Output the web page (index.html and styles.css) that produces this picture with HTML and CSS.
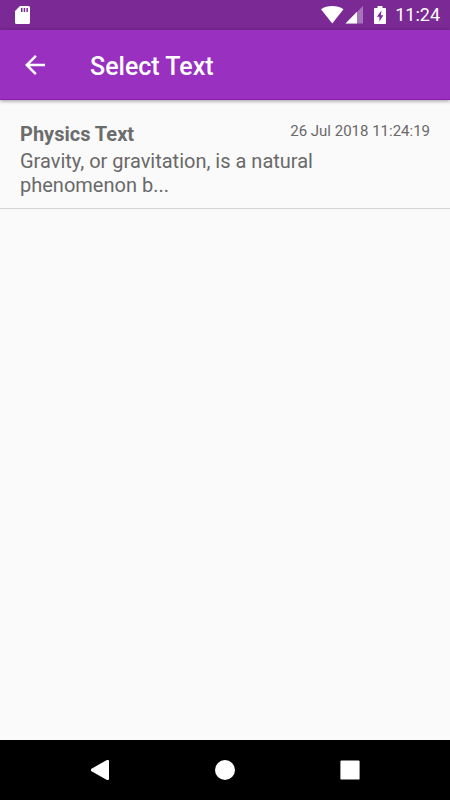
FILE: index.html
```html
<!DOCTYPE html>
<html lang="en">
<head>
  <meta charset="UTF-8">
  <title>Select Text</title>
  <meta name="viewport" content="width=device-width, initial-scale=1.0">
  <link rel="stylesheet" href="styles.css">
</head>
<body>
  <!-- System status bar -->
  <div class="status-bar">
    <svg class="sd-card" width="16" height="20" viewBox="0 0 16 20" aria-hidden="true">
      <path fill="#fff" fill-rule="evenodd" d="M5 1H13.500a1.500 1.500 0 0 1 1.500 1.500v15a1.500 1.500 0 0 1-1.500 1.500H1.500a1.500 1.500 0 0 1-1.500-1.500V6zM6 3v4h1.500V3zM8.700 3v4h1.500V3zM11.400 3v4h1.500V3z"/>
    </svg>
    <div class="status-icons">
      <svg width="44" height="20" viewBox="0 0 44 20" aria-hidden="true">
        <path fill="#fff" d="M0 4.300C6 0 16.500 0 22.500 4.300L11.250 18.500z"/>
        <path fill="#fff" opacity=".35" d="M42 1v17.500H24.500z"/>
        <path fill="#fff" d="M24.500 18.500L36 6.800v11.700z"/>
      </svg>
      <svg width="12" height="20" viewBox="0 0 12 20" aria-hidden="true">
        <path fill="#fff" fill-rule="evenodd" d="M3.500 1h5v2H11a1 1 0 0 1 1 1v14a1 1 0 0 1-1 1H1a1 1 0 0 1-1-1V4a1 1 0 0 1 1-1h2.500zM7.500 5.500L2.800 11.800h2.600V16.500L9.300 10.200H6.800z"/>
      </svg>
      <span class="clock">11:24</span>
    </div>
  </div>

  <header>
    <a class="back" href="#" aria-label="Back">
      <svg width="30" height="30" viewBox="0 0 24 24" aria-hidden="true">
        <path fill="#fff" d="M20 11H7.830l5.590-5.590L12 4l-8 8 8 8 1.410-1.410L7.830 13H20v-2z"/>
      </svg>
    </a>
    <h1>Select Text</h1>
  </header>

  <main>
    <ul class="text-list">
      <li>
        <a href="#">
          <div class="text-head">
            <h2>Physics Text</h2>
            <time datetime="2018-07-26T11:24:19">26 Jul 2018 11:24:19</time>
          </div>
          <p>Gravity, or gravitation, is a natural phenomenon b...</p>
        </a>
      </li>
    </ul>
  </main>

  <!-- System navigation -->
  <div class="nav-bar">
    <button type="button" aria-label="Back">
      <svg width="24" height="24" viewBox="0 0 24 24" aria-hidden="true">
        <path fill="#fff" stroke="#fff" stroke-width="2" stroke-linejoin="round" d="M20 3v18h-1L4 12.500v-1L19 3z"/>
      </svg>
    </button>
    <button type="button" aria-label="Home">
      <svg width="24" height="24" viewBox="0 0 24 24" aria-hidden="true">
        <circle cx="12" cy="12" r="10" fill="#fff"/>
      </svg>
    </button>
    <button type="button" aria-label="Recent apps">
      <svg width="24" height="24" viewBox="0 0 24 24" aria-hidden="true">
        <rect x="2.400" y="2.400" width="19.200" height="19.200" rx="1.200" fill="#fff"/>
      </svg>
    </button>
  </div>
</body>
</html>
```

FILE: styles.css
```css
* {
  box-sizing: border-box;
}
body {
  display: flex;
  flex-direction: column;
  min-height: 100vh;
  margin: 0;
  background: #fafafa;
  color: #696969;
  font-family: Roboto, sans-serif;
}
svg {
  display: block;
}
.status-bar {
  display: flex;
  align-items: center;
  justify-content: space-between;
  height: 30px;
  padding: 0 10px 0 15px;
  background: #7b2995;
  color: #fff;
}
.status-icons {
  display: flex;
  align-items: center;
  gap: 9px;
}
.clock {
  font-size: 18px;
  line-height: 20px;
}
header {
  display: flex;
  align-items: center;
  gap: 40px;
  height: 70px;
  padding: 0 20px;
  background: #9a30c0;
  border-bottom: 1px solid #8a1cae;
  color: #fff;
  box-shadow: 0 1px 4px rgba(0,0,0,0.4);
}
h1 {
  margin: 0;
  padding-top: 4px;
  font-size: 25px;
  font-weight: 500;
}
main {
  flex: 1;
}
.text-list {
  list-style: none;
  margin: 0;
  padding: 0;
}
.text-list li {
  border-bottom: 1px solid #d4d4d4;
}
.text-list a {
  display: block;
  padding: 20px 20px 11px;
  color: inherit;
  text-decoration: none;
}
.text-head {
  display: flex;
  justify-content: space-between;
  gap: 10px;
  margin-bottom: 1px;
}
h2 {
  margin: 0;
  font-size: 20px;
  line-height: 28px;
  font-weight: bold;
  color: #6c6c6c;
}
time {
  font-size: 15px;
  line-height: 22px;
}
.text-list p {
  max-width: 320px;
  margin: 0;
  font-size: 20px;
  line-height: 24px;
}
.nav-bar {
  display: flex;
  align-items: center;
  justify-content: center;
  gap: 77px;
  height: 60px;
  background: #000;
}
.nav-bar button {
  padding: 12px;
  border: none;
  background: none;
  cursor: pointer;
}
```
